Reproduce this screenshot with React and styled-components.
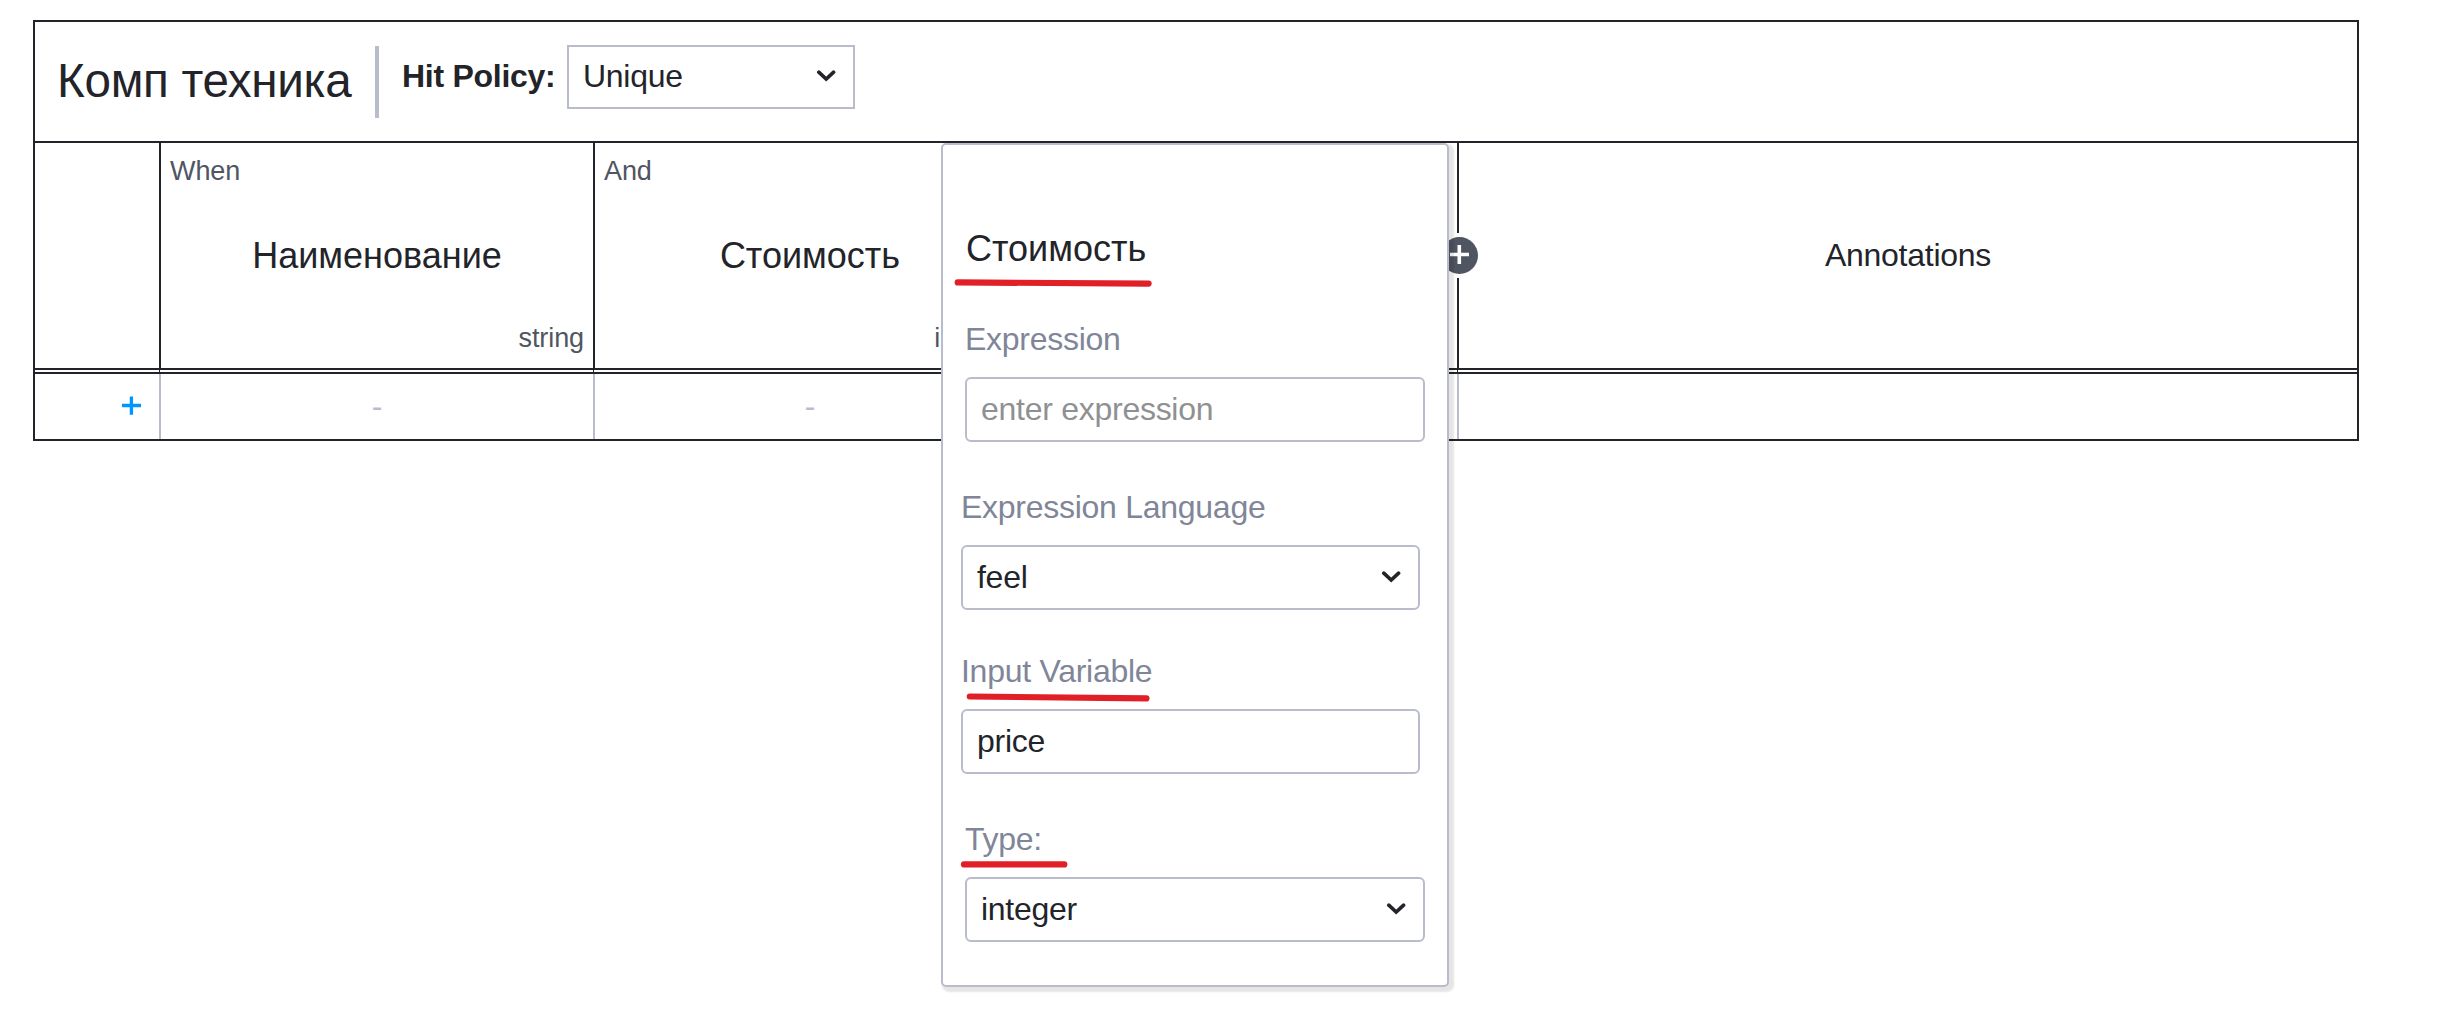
import React from "react";
import styled, { createGlobalStyle } from "styled-components";

const ink = "#22242a";
const line = "#b9bcca";

const GlobalStyle = createGlobalStyle`
  *, *::before, *::after { box-sizing: border-box; }
  body { margin: 0; background: #fff; }
`;

const Page = styled.main`
  position: relative;
  width: 2438px;
  height: 1016px;
  padding: 20px 79px 0 33px;
  overflow: hidden;
  background: #fff;
  color: ${ink};
  font-family: "Liberation Sans", Arial, sans-serif;
  font-size: 32px;
  line-height: 36px;
  letter-spacing: -0.27px;
`;

const Table = styled.section`
  border: 2px solid ${ink};
`;

const Toolbar = styled.header`
  display: flex;
  align-items: flex-start;
  height: 121px;
  padding: 23px 0 0 22px;
  border-bottom: 2px solid ${ink};
`;

const Title = styled.h1`
  margin: 6px 0 0;
  width: 318px;
  font-size: 47.6px;
  font-weight: 400;
  line-height: 60px;
  white-space: nowrap;
`;

const Divider = styled.div`
  width: 4px;
  height: 72px;
  margin-top: 1px;
  background: ${line};
`;

const PolicyLabel = styled.label`
  width: 165px;
  margin: 13px 0 0 23px;
  font-weight: 700;
  white-space: nowrap;
`;

const PolicySelect = styled.div`
  display: flex;
  align-items: flex-start;
  justify-content: space-between;
  width: 288px;
  height: 64px;
  padding: 11px 17px 0 14px;
  border: 2px solid ${line};
`;

const columns = "124px 2px 432px 2px 430px 2px 430px 2px 1fr";

const HeadRow = styled.div`
  display: grid;
  grid-template-columns: ${columns};
  height: 225px;
`;

const HeadCell = styled.div`
  display: flex;
  flex-direction: column;
  justify-content: space-between;
  padding: 12px 9px 14px;
`;

const Clause = styled.span`
  min-height: 32px;
  color: #505562;
  font-size: 27px;
  letter-spacing: -0.1px;
  line-height: 32px;
  text-align: ${(p) => (p.$end ? "right" : "left")};
`;

const Name = styled.span`
  padding-top: ${(p) => (p.$plain ? 0 : 2)}px;
  font-size: ${(p) => (p.$plain ? 32 : 36)}px;
  letter-spacing: ${(p) => (p.$plain ? "-0.27px" : "0")};
  line-height: 40px;
  text-align: center;
`;

const Rule = styled.div`
  background: ${(p) => (p.$soft ? line : ink)};
`;

const SplitRule = styled.div`
  display: flex;
  flex-direction: column;
  justify-content: space-between;
  align-items: center;
  &::before, &::after {
    content: "";
    width: 2px;
    height: 90px;
    background: ${ink};
  }
`;

const AddColumn = styled.svg`
  flex: none;
  width: 37px;
  height: 37px;
  margin: 0 -19px 0 -16px;
`;

const DoubleRule = styled.div`
  height: 6px;
  border-top: 2px solid ${ink};
  border-bottom: 2px solid ${ink};
  display: grid;
  grid-template-columns: ${columns};
`;

const Tick = styled.div`
  width: 1px;
  background: ${ink};
`;

const BodyRow = styled.div`
  display: grid;
  grid-template-columns: ${columns};
  height: 65px;
`;

const BodyCell = styled.div`
  display: flex;
  align-items: center;
  justify-content: ${(p) => (p.$add ? "flex-end" : "center")};
  padding: ${(p) => (p.$add ? "0 18px 3px 0" : "0 0 2px")};
  color: ${line};
`;

const Popup = styled.aside`
  position: absolute;
  left: 941px;
  top: 143px;
  width: 508px;
  height: 844px;
  display: flex;
  flex-direction: column;
  padding: 84px 18px 0;
  border: 2px solid ${line};
  border-radius: 5px;
  background: #fff;
  box-shadow: 3px 3px 2px 2px rgba(0, 0, 0, 0.1);
`;

const PopupTitle = styled.h2`
  margin: 0 0 0 5px;
  font-size: 36px;
  font-weight: 400;
  letter-spacing: 0;
  line-height: 40px;
`;

const Field = styled.div`
  display: flex;
  flex-direction: column;
  gap: 20px;
  width: 460px;
  margin: ${(p) => p.$gap}px 0 0 ${(p) => (p.$inset ? 4 : 0)}px;
`;

const FieldLabel = styled.span`
  color: #808698;
`;

const Control = styled.div`
  display: flex;
  align-items: flex-start;
  justify-content: space-between;
  width: ${(p) => (p.$inset ? 460 : 459)}px;
  height: 65px;
  padding: 12px 17px 0 14px;
  border: 2px solid ${line};
  border-radius: 6px;
  color: ${(p) => (p.$placeholder ? "#909092" : ink)};
`;

const ChevronSvg = styled.svg`
  flex: none;
  width: 20px;
  height: 14px;
  margin-top: 11px;
`;

const Marks = styled.svg`
  position: absolute;
  left: 0;
  top: 0;
  pointer-events: none;
`;

const Chevron = () => (
  <ChevronSvg viewBox="0 0 20 14">
    <path d="M2.8 3.2 L10.2 10 L17.6 3.2" fill="none" stroke={ink} strokeWidth="3.6" strokeLinecap="round" />
  </ChevronSvg>
);

function FormField({ label, value, gap, inset, select, placeholder }) {
  return (
    <Field $gap={gap} $inset={inset}>
      <FieldLabel>{label}</FieldLabel>
      <Control $inset={inset} $placeholder={placeholder}>
        {value}
        {select && <Chevron />}
      </Control>
    </Field>
  );
}

export default function App() {
  return (
    <Page>
      <GlobalStyle />
      <Table>
        <Toolbar>
          <Title>Комп техника</Title>
          <Divider />
          <PolicyLabel>Hit Policy:</PolicyLabel>
          <PolicySelect>
            Unique
            <Chevron />
          </PolicySelect>
        </Toolbar>
        <HeadRow>
          <div />
          <Rule />
          <HeadCell>
            <Clause>When</Clause>
            <Name>Наименование</Name>
            <Clause $end>string</Clause>
          </HeadCell>
          <Rule />
          <HeadCell>
            <Clause>And</Clause>
            <Name>Стоимость</Name>
            <Clause $end>integer</Clause>
          </HeadCell>
          <Rule />
          <div />
          <SplitRule>
            <AddColumn viewBox="0 0 37 37">
              <circle cx="18.5" cy="18.5" r="18.5" fill="#505562" />
              <path d="M9 17.5H28M18.3 8V27" stroke="#fff" strokeWidth="3.6" />
            </AddColumn>
          </SplitRule>
          <HeadCell>
            <Clause />
            <Name $plain>Annotations</Name>
            <Clause />
          </HeadCell>
        </HeadRow>
        <DoubleRule>
          <div />
          <Tick />
          <div />
          <Tick />
          <div />
          <Tick />
          <div />
          <Tick />
        </DoubleRule>
        <BodyRow>
          <BodyCell $add>
            <svg width="19" height="19" viewBox="0 0 19 19">
              <path d="M0 9.5H19M9.4 0.5V18.7" stroke="#0095ff" strokeWidth="3.3" />
            </svg>
          </BodyCell>
          <Rule $soft />
          <BodyCell>-</BodyCell>
          <Rule $soft />
          <BodyCell>-</BodyCell>
          <Rule $soft />
          <BodyCell />
          <Rule $soft />
          <BodyCell />
        </BodyRow>
      </Table>
      <Popup>
        <PopupTitle>Стоимость</PopupTitle>
        <FormField label="Expression" value="enter expression" gap={52} inset placeholder />
        <FormField label="Expression Language" value="feel" gap={47} select />
        <FormField label="Input Variable" value="price" gap={43} />
        <FormField label="Type:" value="integer" gap={47} inset select />
      </Popup>
      <Marks width="2438" height="1016" fill="none" stroke="#e01f26" strokeWidth="6.2" strokeLinecap="round">
        <path d="M957.7 282.4 L1148.6 283.6" />
        <path d="M969.8 696.5 L1146.4 698.4" />
        <path d="M964 864.4 H1064.3" />
      </Marks>
    </Page>
  );
}
